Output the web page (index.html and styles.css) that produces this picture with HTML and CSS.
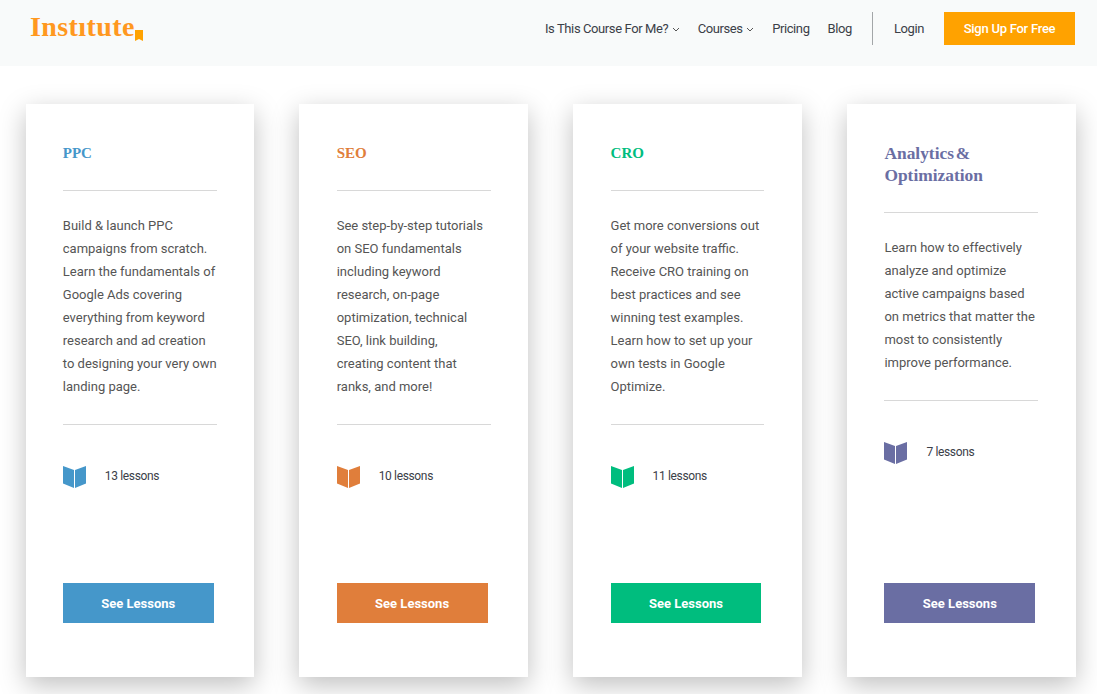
FILE: index.html
```html
<!DOCTYPE html>
<html lang="en">
	<head>
		<meta charset="UTF-8" />
		<meta name="viewport" content="width=device-width, initial-scale=1.0" />
		<title>Institute | Courses</title>
		<link rel="stylesheet" href="styles.css">
	</head>
	<body>
		<header class="topbar">
			<a class="logo" href="#">Instıtute<svg class="logo-mark" viewBox="0 0 8 11"><path d="M0 0H8V11L4 9L0 11Z" /></svg></a>
			<nav class="nav">
				<a href="#">Is This Course For Me?<svg class="chev" viewBox="0 0 8 5"><path d="M1 1L4 4L7 1" /></svg></a>
				<a href="#">Courses<svg class="chev" viewBox="0 0 8 5"><path d="M1 1L4 4L7 1" /></svg></a>
				<a href="#">Pricing</a>
				<a href="#">Blog</a>
				<span class="nav-divider"></span>
				<a href="#">Login</a>
				<a class="signup" href="#">Sign Up For Free</a>
			</nav>
		</header>
		<main class="cards">
			<section class="card ppc">
				<h2>PPC</h2>
				<p>Build &amp; launch PPC campaigns from scratch. Learn the fundamentals of Google Ads covering everything from keyword research and ad creation to designing your very own landing page.</p>
				<div class="lessons">
					<svg class="book" viewBox="0 0 23 22"><path d="M0 0L11 4V22L0 17.500Z" /><path d="M12 4L23 0V17.500L12 22Z" /></svg>
					<span>13 lessons</span>
				</div>
				<a class="btn" href="#">See Lessons</a>
			</section>
			<section class="card seo">
				<h2>SEO</h2>
				<p>See step-by-step tutorials on SEO fundamentals including keyword research, on-page optimization, technical SEO, link building,<br>creating content that ranks, and more!</p>
				<div class="lessons">
					<svg class="book" viewBox="0 0 23 22"><path d="M0 0L11 4V22L0 17.500Z" /><path d="M12 4L23 0V17.500L12 22Z" /></svg>
					<span>10 lessons</span>
				</div>
				<a class="btn" href="#">See Lessons</a>
			</section>
			<section class="card cro">
				<h2>CRO</h2>
				<p>Get more conversions out of your website traffic. Receive CRO training on best practices and see winning test examples. Learn how to set up your own tests in Google Optimize.</p>
				<div class="lessons">
					<svg class="book" viewBox="0 0 23 22"><path d="M0 0L11 4V22L0 17.500Z" /><path d="M12 4L23 0V17.500L12 22Z" /></svg>
					<span>11 lessons</span>
				</div>
				<a class="btn" href="#">See Lessons</a>
			</section>
			<section class="card analytics">
				<h2>Analytics &amp; Optimization</h2>
				<p>Learn how to effectively analyze and optimize active campaigns based on metrics that matter the most to consistently improve performance.</p>
				<div class="lessons">
					<svg class="book" viewBox="0 0 23 22"><path d="M0 0L11 4V22L0 17.500Z" /><path d="M12 4L23 0V17.500L12 22Z" /></svg>
					<span>7 lessons</span>
				</div>
				<a class="btn" href="#">See Lessons</a>
			</section>
		</main>
	</body>
</html>
```

FILE: styles.css
```css
* {
	box-sizing: border-box;
}
body {
	font-family: "Roboto", "Liberation Sans", sans-serif;
	background: #fff;
	margin: 0;
	padding: 0;
	height: 694px;
	overflow: hidden;
}
a {
	text-decoration: none;
	color: inherit;
}
.topbar {
	background: #f8fafa;
	height: 66px;
	display: flex;
	align-items: flex-start;
	justify-content: space-between;
	padding: 12px 22px 0 30px;
}
.logo {
	font-family: "Liberation Serif", serif;
	font-weight: 700;
	font-size: 28px;
	line-height: 30px;
	letter-spacing: 0.4px;
	color: #ff981f;
	display: flex;
	align-items: flex-end;
}
.logo-mark {
	width: 8px;
	height: 11px;
	fill: #ffa200;
	margin-bottom: 1px;
}
.nav {
	display: flex;
	align-items: center;
	height: 33px;
	font-size: 13px;
	letter-spacing: -0.4px;
	color: #3b4048;
}
.nav a {
	margin-right: 18px;
	display: flex;
	align-items: center;
}
.chev {
	width: 8px;
	height: 5px;
	margin-left: 3.500px;
	margin-top: 2px;
	fill: none;
	stroke: #555;
	stroke-width: 1;
}
.nav-divider {
	width: 1px;
	height: 33px;
	background: #a3a6a8;
	margin: 0 21px 0 2px;
}
.nav .signup {
	background: #ffa200;
	color: #fff;
	font-weight: 500;
	letter-spacing: -0.25px;
	width: 131px;
	height: 33px;
	justify-content: center;
	margin-right: 0;
	margin-left: 2px;
}
.cards {
	display: grid;
	grid-template-columns: repeat(4, 1fr);
	gap: 45px;
	padding: 38px 21px 0 25.500px;
}
.card {
	height: 573px;
	background: #fff;
	box-shadow: 0 8px 25px rgba(0, 0, 0, 0.25);
	padding: 38px 37.650px 54px 37.300px;
	display: flex;
	flex-direction: column;
}
.card h2 {
	margin: 0;
	font-family: "Liberation Serif", serif;
	font-weight: 700;
	font-size: 15px;
	line-height: 22px;
	padding-bottom: 26px;
	border-bottom: 1px solid #d8d8d8;
}
.card p {
	margin: 0;
	padding: 23px 0 26px;
	font-size: 13px;
	line-height: 23px;
	color: #555;
	border-bottom: 1px solid #d8d8d8;
}
.lessons {
	display: flex;
	align-items: center;
	gap: 19px;
	margin-top: 41px;
	font-size: 12px;
	letter-spacing: -0.35px;
	color: #3b4048;
}
.lessons span {
	padding-bottom: 2px;
}
.book {
	width: 23px;
	height: 22px;
}
.btn {
	margin-top: auto;
	width: 150.850px;
	height: 40px;
	display: flex;
	align-items: center;
	justify-content: center;
	color: #fff;
	font-size: 13px;
	font-weight: 700;
}
.ppc h2 {
	color: #4597ca;
}
.ppc .book {
	fill: #4597ca;
}
.ppc .btn {
	background: #4597ca;
}
.seo h2 {
	color: #e07e3b;
}
.seo .book {
	fill: #e07e3b;
}
.seo .btn {
	background: #e07e3b;
}
.cro h2 {
	color: #00bd7e;
}
.cro .book {
	fill: #00bd7e;
}
.cro .btn {
	background: #00bd7e;
}
.analytics h2 {
	color: #6a6ea3;
	font-size: 17.400px;
	word-spacing: -2.500px;
}
.analytics .book {
	fill: #6a6ea3;
}
.analytics .btn {
	background: #6a6ea3;
}
```
